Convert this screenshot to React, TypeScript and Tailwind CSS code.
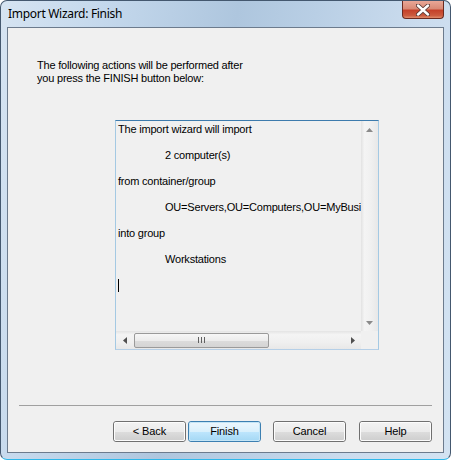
import React from "react";

const lines: { t: string; i: boolean }[] = [
  { t: "The import wizard will import", i: false },
  { t: "2 computer(s)", i: true },
  { t: "from container/group", i: false },
  { t: "OU=Servers,OU=Computers,OU=MyBusiness,DC=contoso,DC=local", i: true },
  { t: "into group", i: false },
  { t: "Workstations", i: true },
];

function Btn({ label, def }: { label: string; def?: boolean }) {
  return (
    <div
      className={
        "w-[73px] h-[21px] rounded-[3px] border flex " +
        (def ? "border-[#3c7fb1]" : "border-[#707070]")
      }
    >
      <div
        className={
          "flex-1 rounded-[2px] border flex items-center justify-center text-[11px] tracking-[-0.1px] text-black " +
          (def
            ? "border-[#c4e5f6] bg-[linear-gradient(180deg,#eaf6fd_0%,#d9f0fc_50%,#bee6fd_51%,#a7d9f5_100%)]"
            : "border-[#fcfcfc] bg-[linear-gradient(180deg,#f2f2f2_0%,#ebebeb_50%,#dddddd_51%,#cfcfcf_100%)]")
        }
      >
        {label}
      </div>
    </div>
  );
}

export default function App() {
  return (
    <div className="w-[451px] h-[460px] font-['Liberation_Sans',Arial,sans-serif]">
      <div className="w-[451px] h-[460px] flex flex-col rounded-[7px] border border-[#44586f] border-b-[#2fb8ea] bg-[linear-gradient(100deg,#d6e4f2_0%,#c4d8ec_20%,#aec6de_45%,#b9cfe5_60%,#cbdcee_80%,#d3e3f2_100%)] overflow-hidden">
        <div className="h-[26px] flex items-start justify-between">
          <div className="pl-[7px] pt-[5px] text-[12px] leading-[16px] tracking-[-0.3px] text-black font-['Noto_Sans',sans-serif]">
            Import Wizard: Finish
          </div>
          <div className="mr-[6px] w-[42px] h-[18px] rounded-b-[4px] border border-t-0 border-[#6b2a20] bg-[linear-gradient(180deg,#e9a797_0%,#d98a76_45%,#c5412a_55%,#cc5a3e_85%,#e18c6c_100%)] flex items-center justify-center">
            <svg width="14" height="12" viewBox="0 0 14 12">
              <path d="M2 1.5 L12 10.5 M12 1.5 L2 10.5" stroke="#5a3a36" strokeWidth="4.2" strokeLinecap="round" />
              <path d="M2 1.5 L12 10.5 M12 1.5 L2 10.5" stroke="#ffffff" strokeWidth="2.4" strokeLinecap="round" />
            </svg>
          </div>
        </div>
        <div className="mx-[6px] mb-[6px] flex-1 border border-[#6c7b8d] bg-[#f0f0f0] flex flex-col">
          <div className="pl-[29px] pt-[31px] text-[11px] leading-[13px] tracking-[-0.2px] text-black">
            <div>The following actions will be performed after</div>
            <div>you press the FINISH button below:</div>
          </div>
          <div className="ml-[107px] mt-[35px] w-[264px] h-[230px] border border-[#a4c9e3] border-t-[#3d7bad] border-b-[#b5cfe7] flex flex-col">
            <div className="flex h-[210px]">
              <div className="flex-1 overflow-hidden pl-[2px] pt-[2px] text-[11px] leading-[13px] tracking-[-0.2px] text-black whitespace-nowrap">
                {lines.map((l, k) => (
                  <div key={k}>
                    <div className={l.i ? "pl-[47px]" : ""}>{l.t}</div>
                    <div className="h-[13px]" />
                  </div>
                ))}
                <div className="w-[1px] h-[13px] bg-black" />
              </div>
              <div className="w-[17px] flex flex-col justify-between bg-[linear-gradient(90deg,#e2e2e2_0%,#f4f4f4_20%,#f0f0f0_60%,#e8e8e8_100%)]">
                <div className="h-[17px] flex items-center justify-center">
                  <svg width="7" height="4" viewBox="0 0 7 4"><path d="M0 4 L3.5 0 L7 4 Z" fill="#8a8a8a" /></svg>
                </div>
                <div className="h-[17px] flex items-center justify-center">
                  <svg width="7" height="4" viewBox="0 0 7 4"><path d="M0 0 L3.5 4 L7 0 Z" fill="#8a8a8a" /></svg>
                </div>
              </div>
            </div>
            <div className="flex h-[18px]">
              <div className="flex-1 flex items-center bg-[linear-gradient(180deg,#e4e4e4_0%,#f4f4f4_20%,#f0f0f0_60%,#e8e8e8_100%)]">
                <div className="w-[18px] h-full flex items-center justify-center">
                  <svg width="4" height="7" viewBox="0 0 4 7"><path d="M4 0 L0 3.5 L4 7 Z" fill="#505050" /></svg>
                </div>
                <div className="w-[135px] h-[15px] rounded-[2px] border border-[#9a9a9a] bg-[linear-gradient(180deg,#f7f7f7_0%,#ececec_50%,#dcdcdc_51%,#d4d4d4_100%)] flex items-center justify-center gap-[2px]">
                  <div className="w-[1px] h-[6px] bg-[#606060]" />
                  <div className="w-[1px] h-[6px] bg-[#606060]" />
                  <div className="w-[1px] h-[6px] bg-[#606060]" />
                </div>
                <div className="flex-1" />
                <div className="w-[17px] h-full flex items-center justify-center">
                  <svg width="4" height="7" viewBox="0 0 4 7"><path d="M0 0 L4 3.5 L0 7 Z" fill="#505050" /></svg>
                </div>
              </div>
              <div className="w-[17px] bg-[#f0f0f0]" />
            </div>
          </div>
          <div className="mt-[55px] mx-[11px] h-[1px] bg-[#a0a0a0]" />
          <div className="mt-[15px] pr-[11px] flex justify-end">
            <Btn label="< Back" />
            <div className="w-[2px]" />
            <Btn label="Finish" def />
            <div className="w-[12px]" />
            <Btn label="Cancel" />
            <div className="w-[13px]" />
            <Btn label="Help" />
          </div>
        </div>
      </div>
    </div>
  );
}
